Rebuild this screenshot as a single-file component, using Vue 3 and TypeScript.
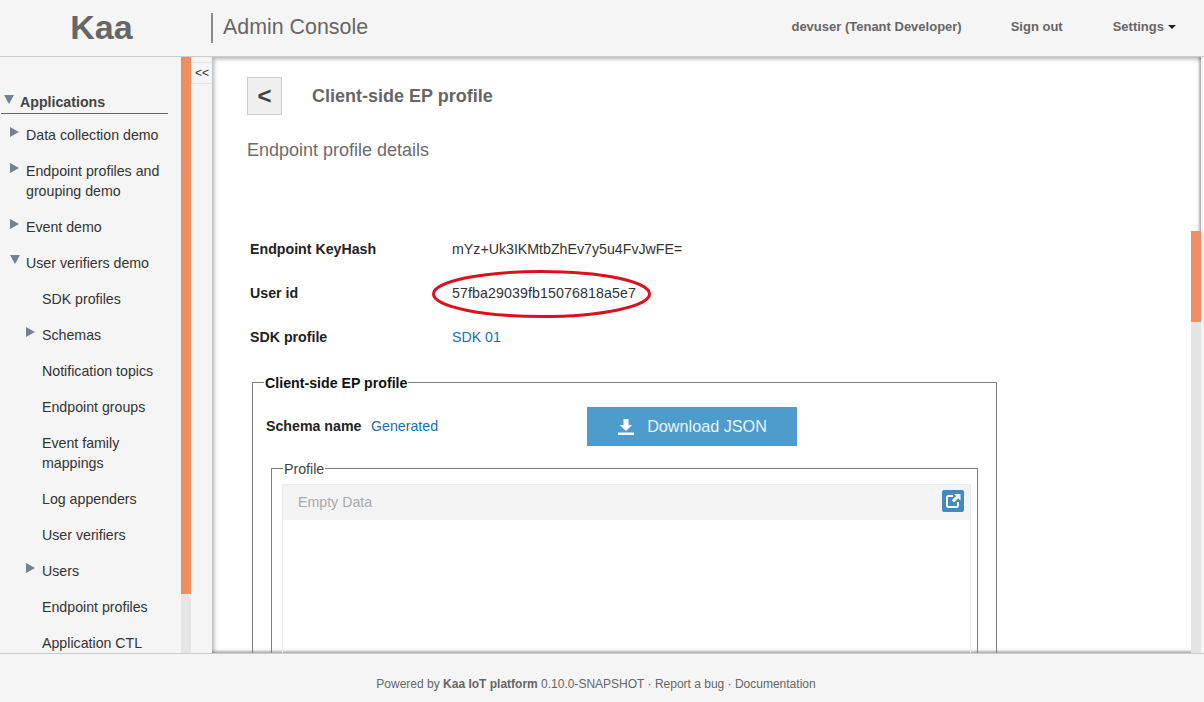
<script setup lang="ts">
interface NavItem {
  label: string
  level: number
  arrow?: 'right' | 'down'
}

const navItems: NavItem[] = [
  { label: 'Data collection demo', level: 1, arrow: 'right' },
  { label: 'Endpoint profiles and grouping demo', level: 1, arrow: 'right' },
  { label: 'Event demo', level: 1, arrow: 'right' },
  { label: 'User verifiers demo', level: 1, arrow: 'down' },
  { label: 'SDK profiles', level: 2 },
  { label: 'Schemas', level: 2, arrow: 'right' },
  { label: 'Notification topics', level: 2 },
  { label: 'Endpoint groups', level: 2 },
  { label: 'Event family mappings', level: 2 },
  { label: 'Log appenders', level: 2 },
  { label: 'User verifiers', level: 2 },
  { label: 'Users', level: 2, arrow: 'right' },
  { label: 'Endpoint profiles', level: 2 },
  { label: 'Application CTL', level: 2 },
]
</script>

<template>
  <div class="page">
    <header class="topbar">
      <div class="brand">Kaa</div>
      <div class="console-title">Admin Console</div>
      <nav class="top-links">
        <a class="user">devuser (Tenant Developer)</a>
        <a class="signout">Sign out</a>
        <a class="settings">Settings<i class="caret"></i></a>
      </nav>
    </header>

    <div class="body">
      <aside class="sidebar">
        <div class="nav-head">
          <i class="arrow down head-arrow"></i>
          <span>Applications</span>
        </div>
        <ul class="nav-list">
          <li v-for="item in navItems" :key="item.label" :class="['nav-item', 'level-' + item.level]">
            <i v-if="item.arrow" :class="['arrow', item.arrow]"></i>
            <span>{{ item.label }}</span>
          </li>
        </ul>
      </aside>
      <div class="side-scroll"><div class="side-thumb"></div></div>
      <div class="strip"><button class="collapse">&lt;&lt;</button></div>

      <div class="content-wrap">
        <main class="content">
          <div class="title-row">
            <button class="back">&lt;</button>
            <h1>Client-side EP profile</h1>
          </div>
          <h2>Endpoint profile details</h2>

          <div class="details">
            <div class="detail-row">
              <span class="detail-label">Endpoint KeyHash</span>
              <span>mYz+Uk3IKMtbZhEv7y5u4FvJwFE=</span>
            </div>
            <div class="detail-row">
              <span class="detail-label">User id</span>
              <span class="circled">
                57fba29039fb15076818a5e7
                <svg class="ring" width="223" height="52" viewBox="0 0 223 52">
                  <ellipse cx="110.5" cy="25" rx="108" ry="22.5" fill="none" stroke="#d8121f" stroke-width="3" />
                </svg>
              </span>
            </div>
            <div class="detail-row">
              <span class="detail-label">SDK profile</span>
              <a class="link">SDK 01</a>
            </div>
          </div>

          <fieldset class="outer">
            <legend>Client-side EP profile</legend>
            <div class="schema-row">
              <span class="schema-label">Schema name</span>
              <a class="link">Generated</a>
              <button class="download">
                <svg width="18" height="16" viewBox="0 0 18 16">
                  <path d="M6.5 0h5v6h3.6L9 12 2.900 6h3.600z" fill="#fff" />
                  <path d="M1 13.500h16V16H1z" fill="#fff" />
                </svg>
                <span>Download JSON</span>
              </button>
            </div>
            <fieldset class="inner">
              <legend>Profile</legend>
              <div class="editor">
                <div class="editor-head">
                  <span>Empty Data</span>
                  <button class="open-btn">
                    <svg width="22" height="22" viewBox="0 0 22 22">
                      <path d="M11 6H6.500A1.500 1.500 0 0 0 5 7.500v8A1.500 1.500 0 0 0 6.500 17h8a1.500 1.500 0 0 0 1.500-1.500V12" fill="none" stroke="#fff" stroke-width="2" />
                      <path d="M12 4h6.500v6.500l-2.300-2.300-4.200 4.300-2.200-2.200 4.300-4.200z" fill="#fff" />
                    </svg>
                  </button>
                </div>
                <div class="editor-body"></div>
              </div>
            </fieldset>
          </fieldset>
        </main>
        <div class="main-scroll">
          <div class="main-thumb"></div>
          <div class="main-track"></div>
        </div>
      </div>
      <div class="right-gap"></div>
    </div>

    <footer class="footer">
      Powered by <b>Kaa IoT platform</b> 0.10.0-SNAPSHOT · Report a bug · Documentation
    </footer>
  </div>
</template>

<style>
body {
  margin: 0;
  overflow: hidden;
}
</style>

<style scoped>
.page {
  height: 702px;
  display: flex;
  flex-direction: column;
  overflow: hidden;
  font-family: "Liberation Sans", Arial, sans-serif;
  font-size: 14.2px;
  color: #333;
  background: #f5f5f5;
}

/* top bar */
.topbar {
  height: 56px;
  flex: none;
  display: flex;
  align-items: center;
  border-bottom: 1px solid #ccc;
  box-sizing: content-box;
}
.brand {
  width: 203px;
  margin-bottom: 2px;
  text-align: center;
  font-size: 34px;
  font-weight: bold;
  color: #666;
}
.console-title {
  margin-left: 8px;
  height: 30px;
  line-height: 28px;
  padding-left: 10px;
  border-left: 2px solid #888;
  font-size: 21.4px;
  color: #666;
}
.top-links {
  margin-left: auto;
  margin-right: 28px;
  margin-bottom: 4px;
  display: flex;
  font-size: 13px;
  font-weight: bold;
  color: #666;
}
.signout {
  margin-left: 49px;
}
.settings {
  margin-left: 50px;
}
.caret {
  display: inline-block;
  margin-left: 4px;
  vertical-align: 2px;
  border-top: 4px solid #222;
  border-left: 4px solid transparent;
  border-right: 4px solid transparent;
}

/* main area */
.body {
  flex: 1;
  min-height: 0;
  display: flex;
}
.sidebar {
  width: 181px;
  flex: none;
  overflow: hidden;
  padding-top: 35px;
  box-sizing: border-box;
}
.nav-head {
  position: relative;
  margin: 0 13px 0 1px;
  padding: 0 0 2px 19px;
  height: 19px;
  line-height: 21px;
  font-weight: bold;
  color: #444;
  border-bottom: 1px solid #666;
}
.head-arrow {
  position: absolute;
  left: 3px;
  top: 3px;
}
.nav-list {
  list-style: none;
  margin: 3px 0 0;
  padding: 0;
}
.nav-item {
  position: relative;
  line-height: 20px;
  padding: 8px 10px 8px 26px;
}
.nav-item.level-2 {
  padding-left: 42px;
}
.nav-item .arrow {
  position: absolute;
  left: 10px;
  top: 10px;
}
.nav-item.level-2 .arrow {
  left: 26px;
}
.arrow {
  display: block;
  width: 0;
  height: 0;
}
.arrow.right {
  border-left: 9px solid #77808f;
  border-top: 5px solid transparent;
  border-bottom: 5px solid transparent;
}
.arrow.down {
  border-top: 9px solid #77808f;
  border-left: 5px solid transparent;
  border-right: 5px solid transparent;
}
.side-scroll {
  width: 10px;
  flex: none;
  background: #e5e5e5;
}
.side-thumb {
  height: 537px;
  background: #ef8d65;
}
.strip {
  width: 21px;
  flex: none;
  padding-top: 5px;
  box-sizing: border-box;
}
.collapse {
  display: block;
  width: 21px;
  height: 22px;
  padding: 0;
  border: 1px solid #e4e4e4;
  border-right: 0;
  background: #f5f5f5;
  font-family: inherit;
  font-size: 12px;
  color: #333;
}

.content-wrap {
  flex: 1;
  min-width: 0;
  display: flex;
  background: #fff;
  box-shadow: inset 2px 2px 4px rgba(0, 0, 0, 0.3), inset -2px -2px 3px rgba(0, 0, 0, 0.3);
}
.content {
  flex: 1;
  min-width: 0;
  overflow: hidden;
  padding: 20px 0 0 35px;
  box-sizing: border-box;
}
.main-scroll {
  width: 10px;
  flex: none;
  display: flex;
  flex-direction: column;
  padding-top: 174px;
  box-sizing: border-box;
}
.main-thumb {
  height: 91px;
  flex: none;
  background: #ef8d65;
}
.main-track {
  flex: 1;
  background: #e5e5e5;
}
.right-gap {
  width: 3px;
  flex: none;
}

.title-row {
  display: flex;
  align-items: center;
}
.back {
  width: 35px;
  height: 38px;
  padding: 0;
  border: 1px solid #ccc;
  background: #f0f0f0;
  font-family: inherit;
  font-size: 24px;
  font-weight: bold;
  line-height: 1;
  color: #444;
}
h1 {
  margin: 0 0 0 30px;
  font-size: 18px;
  color: #666;
}
h2 {
  margin: 24px 0 0;
  font-size: 18px;
  line-height: 22px;
  font-weight: normal;
  color: #6b6b6b;
}
.details {
  margin: 78px 0 0 3px;
}
.detail-row {
  display: flex;
  height: 20px;
  line-height: 20px;
  margin-bottom: 24px;
  color: #333;
}
.detail-label {
  width: 202px;
  font-weight: bold;
  color: #222;
}
.circled {
  position: relative;
  letter-spacing: 0.1px;
}
.ring {
  position: absolute;
  left: -21px;
  top: -14px;
}
.link {
  color: #1a6eb0;
}

fieldset {
  margin: 0;
  min-width: 0;
  border: 1px solid #808080;
  border-bottom: 0;
  box-sizing: border-box;
}
legend {
  padding: 2px 1px 0;
  line-height: 16px;
}
.outer {
  margin: 26px 0 0 5px;
  width: 745px;
  padding: 0 18px 0 13px;
}
.outer > legend {
  margin-left: -2px;
  font-weight: bold;
  color: #111;
}
.schema-row {
  position: relative;
  display: flex;
  align-items: center;
  height: 39px;
  margin-top: 16px;
}
.schema-row > span,
.schema-row > a {
  margin-bottom: 2px;
}
.schema-label {
  width: 105px;
  font-weight: bold;
  color: #222;
}
.download {
  display: flex;
  align-items: center;
  justify-content: center;
  gap: 12px;
  position: absolute;
  left: 321px;
  top: 0;
  width: 210px;
  height: 39px;
  border: 0;
  padding: 0;
  background: #4d9ccc;
  color: #e8f6ff;
  font-family: inherit;
  font-size: 16.2px;
}
.inner {
  margin: 13px 0 0 5px;
  padding: 0 6px 0 10px;
  width: 707px;
  height: 220px;
}
.inner > legend {
  margin-left: 1px;
  color: #444;
}
.editor {
  margin-top: 7px;
  border: 1px solid #ededed;
  height: 300px;
}
.editor-head {
  position: relative;
  height: 35px;
  line-height: 34px;
  padding-left: 15px;
  background: #f3f3f3;
  color: #aaa;
}
.open-btn {
  position: absolute;
  top: 5px;
  right: 6px;
  width: 22px;
  height: 22px;
  padding: 0;
  border: 0;
  border-radius: 2px;
  background: #428bbd;
}
.open-btn svg {
  display: block;
}

.footer {
  height: 49px;
  flex: none;
  box-sizing: border-box;
  border-top: 1px solid #ccc;
  padding: 23px 12px 0 0;
  line-height: 15px;
  text-align: center;
  font-size: 12px;
  color: #666;
  background: #f5f5f5;
}
</style>
